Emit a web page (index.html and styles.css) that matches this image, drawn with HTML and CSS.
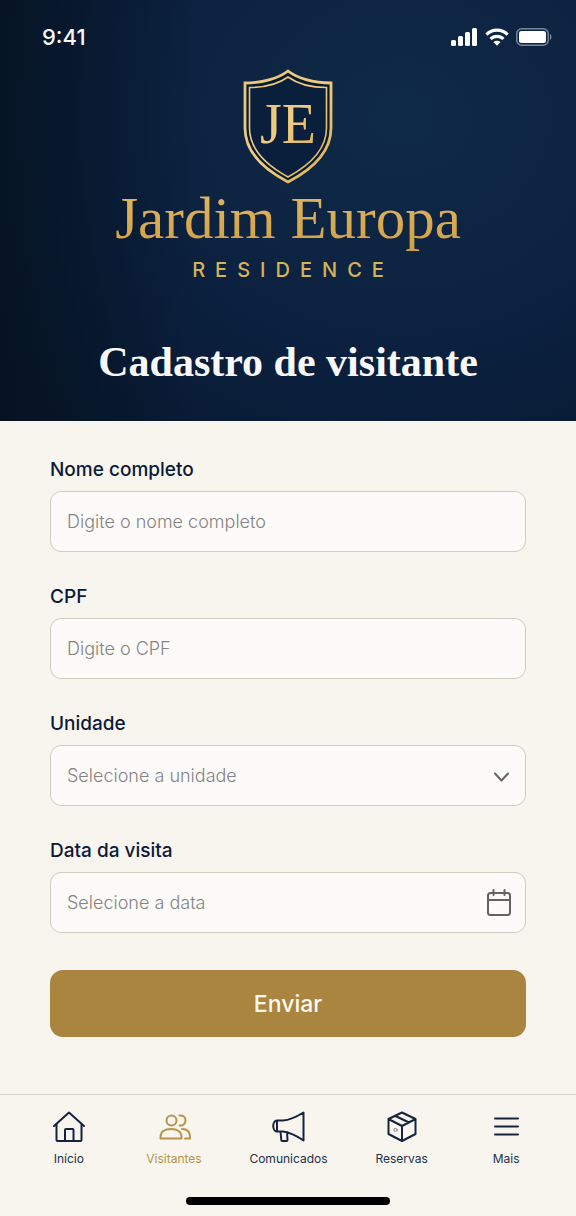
FILE: index.html
```html
<!DOCTYPE html>
<html lang="pt-BR">
  <head>
    <meta charset="UTF-8" />
    <meta name="viewport" content="width=device-width, initial-scale=1.0" />
    <title>Cadastro de visitante - Jardim Europa</title>
    <link rel="stylesheet" href="styles.css">
  </head>
  <body>
    <header class="hero">
      <div class="status-bar">
        <span class="time">9:41</span>
        <div class="status-icons">
          <svg width="27" height="18" viewBox="0 0 27 18" fill="#fff">
            <rect x="0" y="12" width="5" height="6" rx="1.5" />
            <rect x="7" y="8" width="5" height="10" rx="1.5" />
            <rect x="14" y="4" width="5" height="14" rx="1.5" />
            <rect x="21" y="0" width="5" height="18" rx="1.5" />
          </svg>
          <svg width="24" height="18" viewBox="0 0 24 18" fill="none" stroke="#fff" stroke-width="3.2">
            <path d="M1.4 6.6a15 15 0 0 1 21.2 0" />
            <path d="M5.6 11a9 9 0 0 1 12.8 0" />
            <path d="M12 17.8l-3.6-3.7a5.2 5.2 0 0 1 7.2 0z" fill="#fff" stroke="none" />
          </svg>
          <svg width="36" height="18" viewBox="0 0 36 18">
            <rect x="0.75" y="0.75" width="31.5" height="16.5" rx="5" fill="none" stroke="#fff" stroke-opacity=".45" stroke-width="1.5" />
            <rect x="3" y="3" width="27" height="12" rx="2.5" fill="#fff" />
            <path d="M34 6v6c1.8-.6 1.8-5.4 0-6z" fill="#fff" fill-opacity=".5" />
          </svg>
        </div>
      </div>

      <div class="brand">
        <svg class="shield" width="90" height="116" viewBox="0 0 90 116">
          <defs>
            <linearGradient id="gold" x1="0" y1="0" x2="1" y2="1">
              <stop offset="0" stop-color="#e9c375" />
              <stop offset=".5" stop-color="#f0cd83" />
              <stop offset="1" stop-color="#d9ad52" />
            </linearGradient>
          </defs>
          <g fill="none" stroke="url(#gold)">
            <path stroke-width="2.8" fill="#071a33" d="M45 3C36 10 20 15 2 15V60C2 84 20 101 45 114C70 101 88 84 88 60V15C70 15 54 10 45 3Z" />
            <path stroke-width="1.6" fill="#0a1f3c" d="M45 9C36 15.5 22 19.5 6.5 19.5V60C6.5 81 23 97 45 109C67 97 83.5 81 83.5 60V19.5C68 19.5 54 15.5 45 9Z" />
          </g>
          <text class="monogram" x="45" y="75" text-anchor="middle" fill="url(#gold)">JE</text>
        </svg>
        <p class="brand-name">Jardim Europa</p>
        <p class="brand-sub">RESIDENCE</p>
      </div>

      <h1>Cadastro de visitante</h1>
    </header>

    <main>
      <form class="visitor-form">
        <div class="field">
          <label for="nome">Nome completo</label>
          <div class="control">
            <input type="text" id="nome" placeholder="Digite o nome completo" />
          </div>
        </div>

        <div class="field">
          <label for="cpf">CPF</label>
          <div class="control">
            <input type="text" id="cpf" inputmode="numeric" placeholder="Digite o CPF" />
          </div>
        </div>

        <div class="field">
          <label for="unidade">Unidade</label>
          <div class="control">
            <select id="unidade">
              <option value="">Selecione a unidade</option>
            </select>
            <svg class="control-icon" width="28" height="28" viewBox="0 0 28 28">
              <path d="M11 12.5l6.500 7 6.500-7" />
            </svg>
          </div>
        </div>

        <div class="field">
          <label for="data">Data da visita</label>
          <div class="control">
            <input type="text" id="data" placeholder="Selecione a data" />
            <svg class="control-icon" width="28" height="28" viewBox="0 0 28 28">
              <rect x="4" y="5" width="22" height="22" rx="2.5" />
              <path d="M4 12h22M9.500 2v5M20.500 2v5" />
            </svg>
          </div>
        </div>

        <button type="submit">Enviar</button>
      </form>
    </main>

    <footer>
      <nav class="tab-bar">
        <a href="#inicio">
          <svg width="34" height="34" viewBox="0 0 34 34">
            <path d="M2 16L17 2.500 32 16M4.500 14V30a1 1 0 0 0 1 1h23a1 1 0 0 0 1-1V14M13 31V20a1 1 0 0 1 1-1h6.500a1 1 0 0 1 1 1V31" />
          </svg>
          <span>Início</span>
        </a>
        <a href="#visitantes" class="active" aria-current="page">
          <svg width="34" height="34" viewBox="0 0 34 34">
            <circle cx="14.500" cy="10.500" r="5" />
            <path d="M3.500 28.500v-1.500c0-5 4-8 10.500-8s10.500 3 10.500 8v1.500zM22.500 5.500c3.500-.500 6 1.700 6 5s-2.500 5.500-6 5M25 19c5 0 8 2.500 8 8v1.500H28" />
          </svg>
          <span>Visitantes</span>
        </a>
        <a href="#comunicados">
          <svg width="34" height="34" viewBox="0 0 34 34">
            <path d="M6 10.500H12C20 10 26 6.500 32.500 2.500v28C26 26 20 22.500 12 21.500H6c-5 0-5-11 0-11zM6 10.500v11M9.500 21.500l.8 8.500a1 1 0 0 0 1 1h4.200a1 1 0 0 0 1-1l-.500-8" />
          </svg>
          <span>Comunicados</span>
        </a>
        <a href="#reservas">
          <svg width="34" height="34" viewBox="0 0 34 34">
            <path d="M17 2.500L30.500 9v15L17 31 3.500 24V9zM3.500 9L17 16l13.500-7M17 16v15M10.500 6L24 12.500" />
            <ellipse class="stamp" cx="10.500" cy="20" rx="1.800" ry="1.500" />
          </svg>
          <span>Reservas</span>
        </a>
        <a href="#mais">
          <svg width="34" height="34" viewBox="0 0 34 34">
            <path d="M6 8.500h23M6 16.500h23M6 24.500h23" />
          </svg>
          <span>Mais</span>
        </a>
      </nav>
      <div class="home-indicator"></div>
    </footer>
  </body>
</html>
```

FILE: styles.css
```css
* {
  box-sizing: border-box;
}

body {
  margin: 0;
  min-height: 100vh;
  display: flex;
  flex-direction: column;
  background-color: #f8f5ef;
  color: #0b1a38;
  font-family: Inter, 'Liberation Sans', sans-serif;
}

p,
h1 {
  margin: 0;
}

/* Topo */
.hero {
  display: flex;
  flex-direction: column;
  padding-bottom: 35px;
  background:
    linear-gradient(90deg, rgba(4, 16, 28, 0.65), rgba(4, 16, 28, 0) 34%),
    radial-gradient(ellipse 85% 100% at 70% 28%, #0f2a48, #0b203e 60%, #08182f);
  color: #f8f8fa;
  text-align: center;
}

.status-bar {
  display: flex;
  justify-content: space-between;
  align-items: center;
  height: 68px;
  padding: 6px 24px 0 42px;
}

.time {
  font-size: 22px;
  font-weight: 500;
}

.status-icons {
  display: flex;
  align-items: center;
  gap: 7px;
}

.brand {
  display: flex;
  flex-direction: column;
  align-items: center;
}

.monogram {
  font-family: 'Liberation Serif', serif;
  font-size: 56px;
}

.brand-name {
  font-family: 'Liberation Serif', serif;
  font-size: 59px;
  line-height: 68px;
  background: linear-gradient(#e3b964, #cf9f45);
  background-clip: text;
  -webkit-background-clip: text;
  color: transparent;
}

.brand-sub {
  margin-top: 6px;
  padding-left: 10px;
  font-size: 20px;
  font-weight: 500;
  line-height: 24px;
  letter-spacing: 10px;
  color: #d5b357;
}

h1 {
  margin-top: 56px;
  font-family: 'Liberation Serif', serif;
  font-size: 42px;
  font-weight: 700;
  line-height: 48px;
}

/* Formulário */
main {
  flex: 1;
  padding: 36px 50px 32px;
}

.visitor-form {
  display: flex;
  flex-direction: column;
  gap: 32px;
}

.field {
  display: flex;
  flex-direction: column;
  gap: 8px;
}

.field label {
  font-size: 19px;
  font-weight: 500;
  line-height: 26px;
}

.control {
  position: relative;
}

.control input,
.control select {
  display: block;
  width: 100%;
  height: 61px;
  padding: 0 56px 0 16px;
  border: 1px solid #d0ccc0;
  border-radius: 11px;
  outline: none;
  appearance: none;
  background-color: #fcfbf9;
  color: #848484;
  font-family: inherit;
  font-size: 18px;
  font-weight: 300;
}

.control input::placeholder {
  color: #848484;
}

.control input:focus,
.control select:focus {
  border-color: #a9853f;
}

/* ícone sobre o campo */
.control-icon {
  position: absolute;
  right: 14px;
  top: 16px;
  pointer-events: none;
  fill: none;
  stroke: #66635f;
  stroke-width: 2;
  stroke-linecap: round;
  stroke-linejoin: round;
}

button {
  height: 67px;
  margin-top: 5px;
  border: none;
  border-radius: 13px;
  background-color: #a9853f;
  color: #fffaf0;
  cursor: pointer;
  font-family: inherit;
  font-size: 23px;
  font-weight: 500;
}

/* Navegação inferior */
footer {
  padding: 15px 24px 11px;
  border-top: 1px solid #d8d4cb;
}

.tab-bar {
  display: grid;
  grid-template-columns: 90fr 121fr 109fr 118fr 92fr;
}

.tab-bar a {
  display: flex;
  flex-direction: column;
  align-items: center;
  gap: 5px;
  color: #22304c;
  font-size: 12px;
  line-height: 20px;
  text-decoration: none;
}

.tab-bar svg {
  fill: none;
  stroke: #16233f;
  stroke-width: 2;
  stroke-linecap: round;
  stroke-linejoin: round;
}

.tab-bar .stamp {
  stroke: #8a8f98;
  stroke-width: 1;
}

.tab-bar .active {
  color: #b8934c;
}

.tab-bar .active svg {
  stroke: #b8934c;
}

.home-indicator {
  width: 204px;
  height: 8px;
  margin: 28px auto 0;
  border-radius: 4px;
  background-color: #000;
}
```
